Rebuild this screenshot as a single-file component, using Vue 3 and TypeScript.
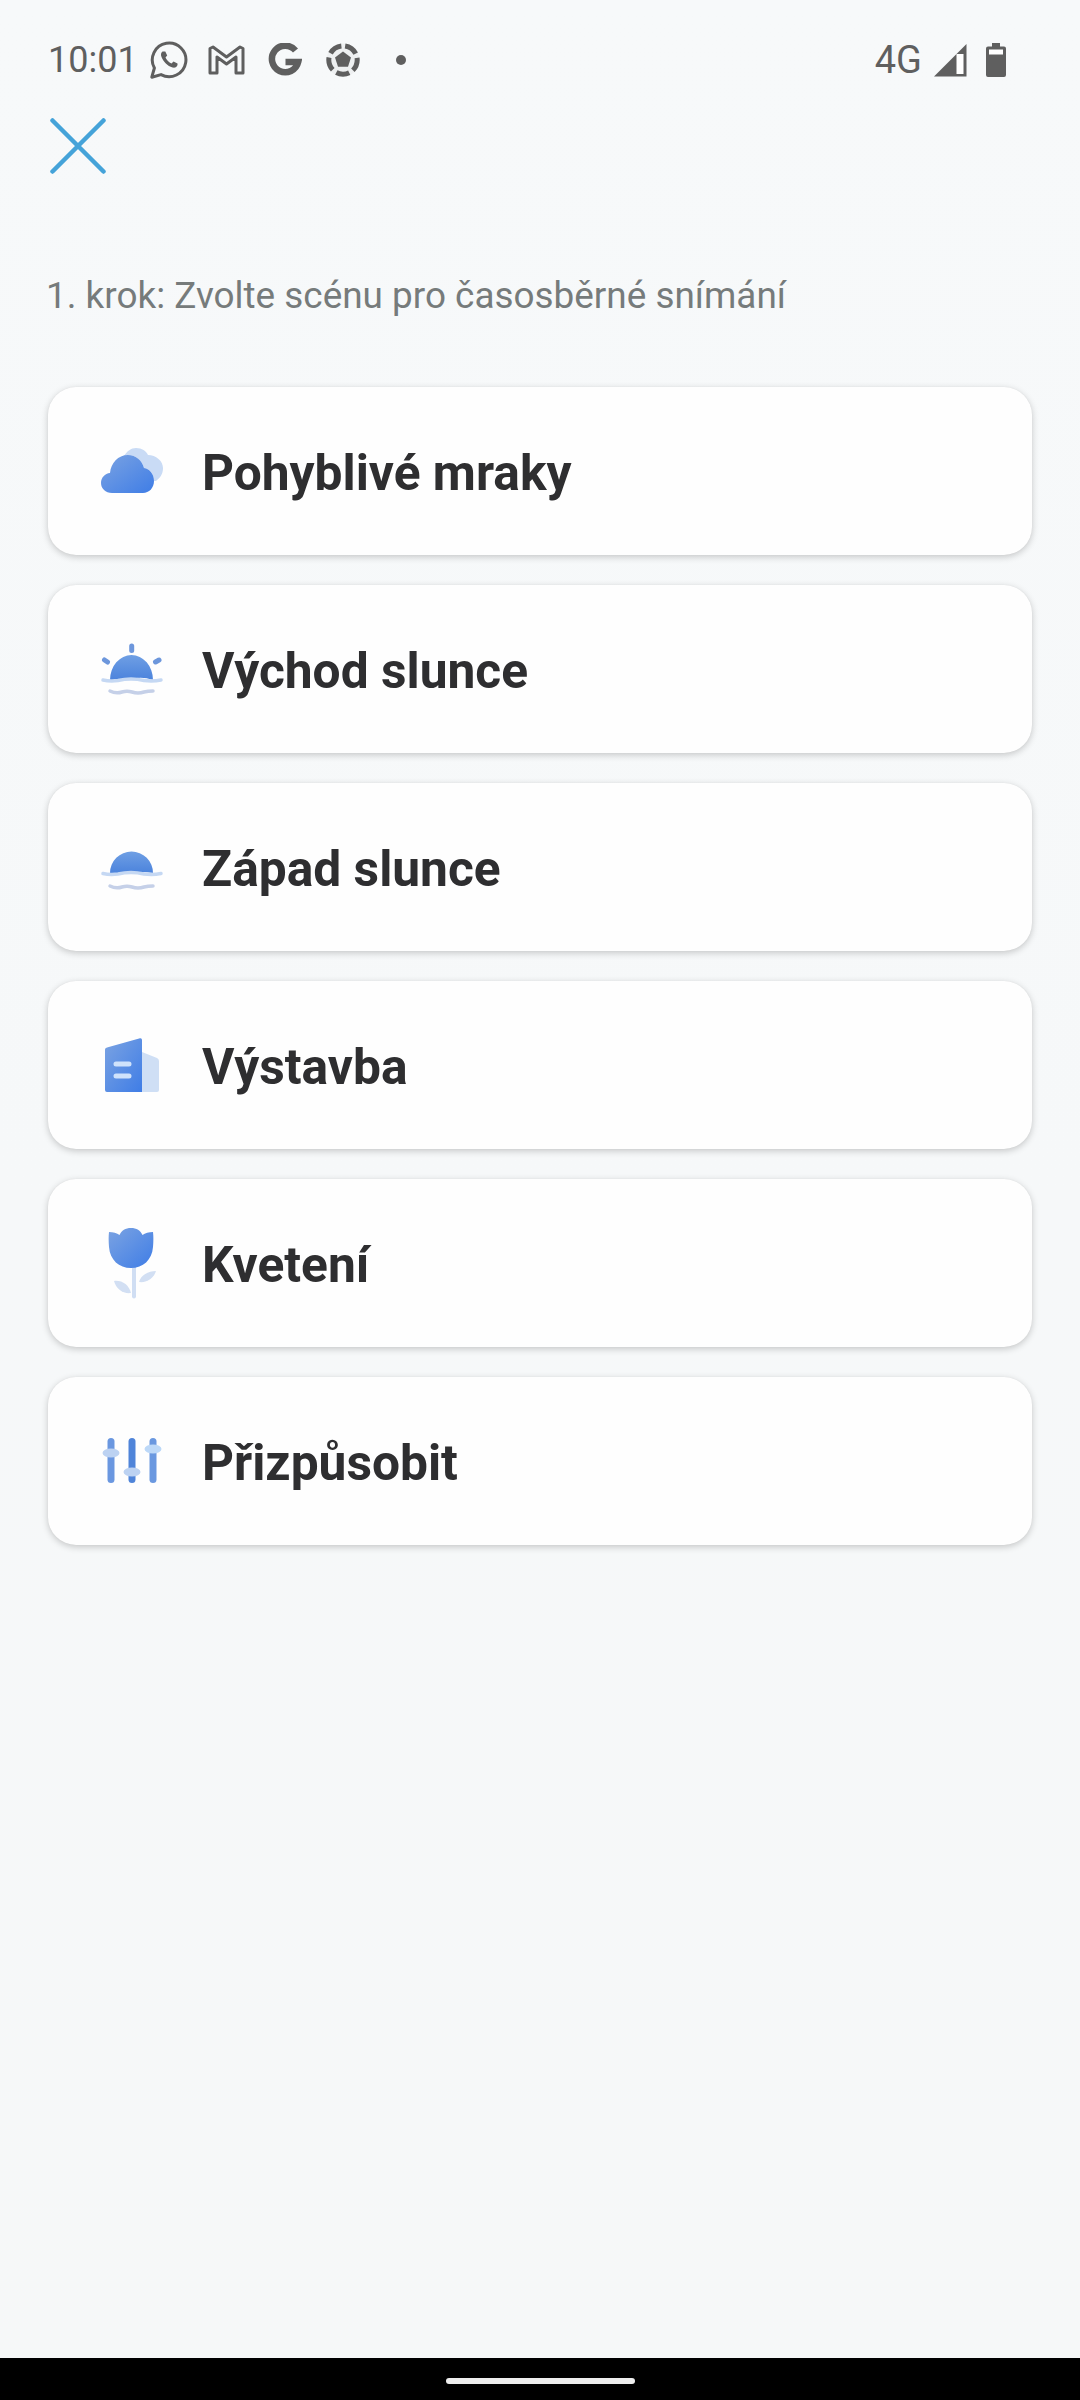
<script setup lang="ts">
interface Scene {
  id: string
  label: string
}
const scenes: Scene[] = [
  { id: 'clouds', label: 'Pohyblivé mraky' },
  { id: 'sunrise', label: 'Východ slunce' },
  { id: 'sunset', label: 'Západ slunce' },
  { id: 'building', label: 'Výstavba' },
  { id: 'flower', label: 'Kvetení' },
  { id: 'custom', label: 'Přizpůsobit' },
]
</script>

<template>
  <div class="page">
    <svg width="0" height="0" class="defs" aria-hidden="true">
      <defs>
        <linearGradient id="blue" x1="0" y1="0" x2="1" y2="1">
          <stop offset="0" stop-color="#7ba3e2" />
          <stop offset="1" stop-color="#3f7de6" />
        </linearGradient>
        <linearGradient id="dome" x1="0" y1="0" x2="0" y2="1">
          <stop offset="0" stop-color="#6f9fe4" />
          <stop offset="1" stop-color="#4a82dc" />
        </linearGradient>
      </defs>
    </svg>

    <header class="status">
      <div class="status-left">
        <span class="time">10:01</span>
        <svg class="s-wa" width="38" height="38" viewBox="0 0 38 38">
          <path d="M1.8 36.2 L4.4 27 A16.8 16.8 0 1 1 11 33.6 Z" fill="none" stroke="#5f5f5f" stroke-width="3" stroke-linejoin="round" />
          <path d="M12.5 10.5 C11 11.5 10.5 13.5 11.5 16 C13.5 21 17.5 25 22.5 26.5 C25 27 27 26 27.5 24 L27.5 22.5 L23.5 20.5 L21.5 22.5 C19 21.5 16.5 19 15.5 16.5 L17.2 14.5 L15.3 10.5 Z" fill="#5f5f5f" />
        </svg>
        <svg class="s-gm" width="37" height="30" viewBox="0 0 37 30">
          <path d="M2 28 V3.5 L5 2 L18.5 12 L32 2 L35 3.5 V28 H28 V12 L18.5 19 L9 12 V28 Z" fill="none" stroke="#5f5f5f" stroke-width="3" stroke-linejoin="round" />
        </svg>
        <svg class="s-g" width="34" height="34" viewBox="0 0 34 34">
          <path d="M27.5 7.5 A13.3 13.3 0 1 0 30.2 19 H17.5" fill="none" stroke="#5f5f5f" stroke-width="6.5" />
        </svg>
        <svg class="s-ball" width="34" height="34" viewBox="0 0 34 34">
          <circle cx="17" cy="17" r="16.5" fill="#eef0f1" />
          <path d="M17 8.5 L25 14.4 L22 23.8 H12 L9 14.4 Z" fill="#5f5f5f" />
          <circle cx="17" cy="17" r="14.2" fill="none" stroke="#5f5f5f" stroke-width="5" stroke-dasharray="13.4 4.44" stroke-dashoffset="-2.2" transform="rotate(-90 17 17)" />
        </svg>
        <span class="dot"></span>
      </div>
      <div class="status-right">
        <span class="net">4G</span>
        <svg width="33" height="33" viewBox="0 0 33 33">
          <path d="M0 32.5 L32.5 0 V32.5 Z" fill="#5f5f5f" />
          <rect x="22.5" y="10" width="7" height="20" fill="#ffffff" />
        </svg>
        <svg width="20" height="34" viewBox="0 0 20 34">
          <path d="M6 0 H14 V3.5 H18 Q20 3.5 20 5.5 V32 Q20 34 18 34 H2 Q0 34 0 32 V5.5 Q0 3.5 2 3.5 H6 Z" fill="#5f5f5f" />
          <rect x="3" y="6.5" width="14" height="5" fill="#ffffff" />
        </svg>
      </div>
    </header>

    <button class="close" type="button" aria-label="Zavřít">
      <svg width="56" height="56" viewBox="0 0 56 56">
        <path d="M2.5 2.5 L53.5 53.5 M53.5 2.5 L2.5 53.5" stroke="#45a3d9" stroke-width="4.5" stroke-linecap="round" />
      </svg>
    </button>

    <p class="hint">1. krok: Zvolte scénu pro časosběrné snímání</p>

    <ul class="list">
      <li v-for="s in scenes" :key="s.id" class="card">
        <svg class="icon" width="72" height="72" viewBox="0 0 72 72">
          <template v-if="s.id === 'clouds'">
            <path d="M28 21 C31 16 35 13 40 13 C46 13 50 16 52 20 C60 20 67 26 67 33 C67 39 64 43 60 46 L58 46 C58 39.5 54 34 48 33 C46 25.5 40 20 32 20 Z" fill="#c9dbf5" />
            <path d="M16 58 C9.5 58 5 53.5 5 48 C5 42.5 9 38.5 14 38 C15 28 22 20 32 20 C40 20 46 25.5 48 33 C54 34 58 39.5 58 46 C58 53 53 58 47 58 Z" fill="url(#blue)" />
          </template>
          <template v-else-if="s.id === 'sunrise'">
            <path d="M14 47 A21.5 25 0 0 1 57 47 Q46 43 35.5 46 Q25 49 14 47 Z" fill="url(#dome)" />
            <path d="M35.7 13 V17.5" stroke="#6d97dc" stroke-width="5" stroke-linecap="round" />
            <path d="M8.5 27 L11.5 29 M63 27 L59.5 29" stroke="#6d97dc" stroke-width="5" stroke-linecap="round" />
            <path d="M7 47 Q14 48.5 22 47.5 Q35 44.5 48 47.5 Q57 48.5 65 47" fill="none" stroke="#c5d8f3" stroke-width="3.5" stroke-linecap="round" />
            <path d="M14 58 Q20 61 26 59 Q31 57.5 36 59 Q42 61 48 59 Q52 58 57 58" fill="none" stroke="#c5d0e8" stroke-width="3.5" stroke-linecap="round" />
          </template>
          <template v-else-if="s.id === 'sunset'">
            <path d="M14 42 A21.5 21.5 0 0 1 57 42 Q46 40 35.5 42 Q25 44 14 42 Z" fill="url(#dome)" />
            <path d="M7 42.5 Q14 44 22 43 Q35 40 48 43 Q57 44 65 42.5" fill="none" stroke="#c5d8f3" stroke-width="3.5" stroke-linecap="round" />
            <path d="M14 55 Q20 58 26 56 Q31 54.5 36 56 Q42 58 48 56 Q52 55 57 55" fill="none" stroke="#c5d0e8" stroke-width="3.5" stroke-linecap="round" />
          </template>
          <template v-else-if="s.id === 'building'">
            <path d="M46 23 L61 29 Q63 30 63 32 V61 Q63 63 61 63 H46 Z" fill="#cfdff5" />
            <path d="M11 18.5 L44 9.3 Q46 9 46 11 V63 H11 Q9 63 9 61 V20.5 Q9 19 11 18.5 Z" fill="url(#blue)" />
            <path d="M20 35 H33 M20 47 H33" stroke="#cfe2fb" stroke-width="5" stroke-linecap="round" />
          </template>
          <template v-else-if="s.id === 'flower'">
            <path d="M38 41 V69.5" stroke="#d0def3" stroke-width="4" stroke-linecap="round" />
            <path d="M43 55 C45 48 52 44 60 44 C58 51 51 56 43 55 Z" fill="#d2dff3" />
            <path d="M35 66 C27 67 20 62 18 54 C26 53 33 58 35 66 Z" fill="#d2dff3" />
            <path d="M13 5 C17 5 21 6 23.5 8 C25.5 3.5 29.5 1 35 1 C40.5 1 44.5 3.5 46.5 8 C49 6 53 5 57 5 C57.5 9 57.5 14 57 20 C56 33 47 41 35 41 C23 41 14 33 13 20 C12.5 14 12.5 9 13 5 Z" fill="url(#blue)" />
          </template>
          <template v-else>
            <g stroke-width="7" stroke-linecap="round" fill="none">
              <path d="M15 16.5 V54.5" stroke="#6a97e0" />
              <path d="M36 16.5 V54.5" stroke="#4f84d9" />
              <path d="M57 16.5 V54.5" stroke="#6a98e0" />
            </g>
            <ellipse cx="15" cy="28" rx="8.5" ry="4.5" fill="#bcd2f2" />
            <ellipse cx="36" cy="47" rx="8.5" ry="4.5" fill="#bcd2f2" />
            <ellipse cx="57" cy="24" rx="8.5" ry="4.5" fill="#bcd8f8" />
          </template>
        </svg>
        <span class="label">{{ s.label }}</span>
      </li>
    </ul>

    <footer class="navbar"><span class="pill"></span></footer>
  </div>
</template>

<style scoped>
.page {
  width: 1080px;
  height: 2400px;
  display: flex;
  flex-direction: column;
  background: linear-gradient(180deg, #f7f9fa 0%, #f6f8f9 50%, #f6f8f8 100%);
  font-family: Roboto, "Liberation Sans", sans-serif;
  overflow: hidden;
}
.defs {
  position: absolute;
}
.status {
  height: 118px;
  flex: none;
  padding: 0 74px 0 48px;
  box-sizing: border-box;
  display: flex;
  justify-content: space-between;
  align-items: flex-start;
  color: #5f5f5f;
}
.status-left,
.status-right {
  height: 120px;
  display: flex;
  align-items: center;
}
.time {
  font-size: 36px;
  width: 102px;
}
.s-gm {
  margin-left: 20px;
}
.s-g {
  margin-left: 23px;
}
.s-ball {
  margin-left: 24px;
}
.dot {
  width: 10px;
  height: 10px;
  border-radius: 50%;
  background: #5f5f5f;
  margin-left: 36px;
}
.net {
  font-size: 38px;
  margin-right: 12px;
}
.status-right svg:last-child {
  margin-left: 19px;
}
.close {
  flex: none;
  align-self: flex-start;
  width: 56px;
  height: 56px;
  margin-left: 50px;
  padding: 0;
  border: 0;
  background: none;
  line-height: 0;
}
.hint {
  margin: 97px 0 0 46px;
  font-size: 36.9px;
  line-height: 50px;
  color: #767b7b;
  flex: none;
}
.list {
  list-style: none;
  margin: 0;
  padding: 66px 48px 0;
  display: flex;
  flex-direction: column;
  gap: 30px;
  flex: 1;
}
.card {
  height: 168px;
  box-sizing: border-box;
  padding-left: 48px;
  display: flex;
  align-items: center;
  background: #fefefe;
  border-radius: 28px;
  box-shadow: 0 2px 7px rgba(0, 0, 0, 0.2), 0 0 1px rgba(0, 0, 0, 0.08);
}
.icon {
  flex: none;
}
.label {
  margin-left: 34px;
  padding-top: 4px;
  font-size: 49.7px;
  font-weight: 700;
  color: #2e2e30;
}
.navbar {
  flex: none;
  height: 42px;
  background: #000;
  display: flex;
  justify-content: center;
  padding-top: 20px;
  box-sizing: border-box;
}
.pill {
  width: 189px;
  height: 6px;
  border-radius: 3px;
  background: #eeeeee;
}
</style>
